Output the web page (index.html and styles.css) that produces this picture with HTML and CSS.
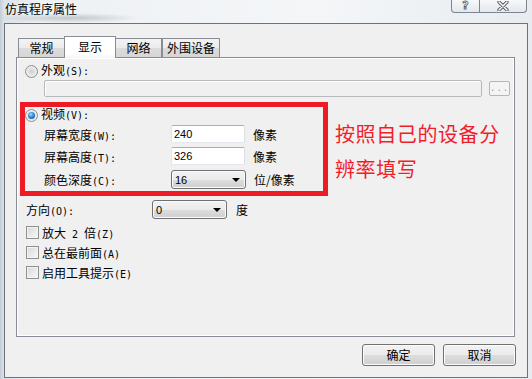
FILE: index.html
```html
<!DOCTYPE html>
<html lang="zh-CN">
<head>
    <meta charset="UTF-8">
    <title>仿真程序属性</title>
    <link rel="stylesheet" href="styles.css">
</head>
<body>
    <div class="window">
        <div class="titlebar">
            <div class="title">仿真程序属性</div>
            <div class="caption-buttons">
                <div class="caption-btn help-btn">?</div>
                <div class="caption-btn close-btn">
                    <svg width="12" height="10" viewBox="0 0 12 10">
                        <path d="M2 1 L10 9 M10 1 L2 9" stroke="#5b6066" stroke-width="3.4" stroke-linecap="round"/>
                        <path d="M2 1 L10 9 M10 1 L2 9" stroke="#fff" stroke-width="1.4" stroke-linecap="round"/>
                    </svg>
                </div>
            </div>
        </div>

        <div class="client">
            <div class="tabs">
                <div class="tab tab-general">常规</div>
                <div class="tab tab-display active">显示</div>
                <div class="tab tab-network">网络</div>
                <div class="tab tab-devices">外围设备</div>
            </div>

            <div class="panel">
                <div class="option-row">
                    <span class="radio"></span>
                    <span>外观<span class="key">(S):</span></span>
                </div>
                <div class="skin-row">
                    <div class="textbox disabled"></div>
                    <div class="browse-btn">...</div>
                </div>

                <div class="option-row video-row">
                    <span class="radio checked"></span>
                    <span>视频<span class="key">(V):</span></span>
                </div>
                <div class="field-row first">
                    <span class="field-label">屏幕宽度<span class="key">(W):</span></span>
                    <div class="textbox">240</div>
                    <span class="unit">像素</span>
                </div>
                <div class="field-row second">
                    <span class="field-label">屏幕高度<span class="key">(T):</span></span>
                    <div class="textbox">326</div>
                    <span class="unit">像素</span>
                </div>
                <div class="field-row third">
                    <span class="field-label">颜色深度<span class="key">(C):</span></span>
                    <div class="combo"><span>16</span><span class="arrow"></span></div>
                    <span class="unit">位/像素</span>
                </div>

                <div class="direction-row">
                    <span class="direction-label">方向<span class="key">(O):</span></span>
                    <div class="combo direction-combo"><span>0</span><span class="arrow"></span></div>
                    <span class="unit-deg">度</span>
                </div>

                <div class="check-row">
                    <span class="checkbox"></span>
                    <span>放大<span class="key"> 2 </span>倍<span class="key">(Z)</span></span>
                </div>
                <div class="check-row">
                    <span class="checkbox"></span>
                    <span>总在最前面<span class="key">(A)</span></span>
                </div>
                <div class="check-row">
                    <span class="checkbox"></span>
                    <span>启用工具提示<span class="key">(E)</span></span>
                </div>
            </div>

            <div class="dialog-buttons">
                <div class="btn">确定</div>
                <div class="btn">取消</div>
            </div>
        </div>

        <!-- red annotation drawn over the screenshot -->
        <div class="annotation-box"></div>
        <div class="annotation-text">按照自己的设备分<br>辨率填写</div>
    </div>
</body>
</html>
```

FILE: styles.css
```css
body {
    margin: 0;
    font-family: "Noto Sans CJK SC", sans-serif;
    font-size: 12px;
    color: #000;
    background: #e9edf1;
}
.window {
    position: relative;
    width: 532px;
    height: 379px;
    overflow: hidden;
    background: linear-gradient(90deg, #c3ccd6 0, #dbe2e9 4px, #eef1f4 40px, #f4f6f8 60%, #e8ecf0 100%);
}
.titlebar {
    height: 23px;
    display: flex;
    justify-content: space-between;
    align-items: flex-start;
    background: radial-gradient(ellipse 70px 5px at 70px 18px, rgba(80, 80, 80, 0.28), transparent);
}
.title {
    margin: 1px 0 0 5px;
    line-height: 16px;
    font-size: 12px;
    text-shadow: 0 0 6px rgba(255, 255, 255, 0.9);
}
.caption-buttons {
    display: flex;
    margin-right: 5px;
}
.caption-btn {
    height: 12px;
    border: 1px solid #7d858e;
    border-top: none;
    background: linear-gradient(#f7f8fa, #e4e8ec);
    display: flex;
    justify-content: center;
    align-items: center;
}
.help-btn {
    width: 27px;
    border-right: none;
    border-radius: 0 0 0 4px;
    font-family: "DejaVu Sans", sans-serif;
    font-weight: bold;
    font-size: 11px;
    line-height: 12px;
    color: #fff;
    -webkit-text-stroke: 0.8px #5b6066;
}
.close-btn {
    width: 46px;
    border-radius: 0 0 4px 0;
}
.client {
    margin-left: 4px;
    width: 524px;
    height: 355px;
    box-sizing: border-box;
    border: 1px solid #6e7378;
    background: #f0f0f0;
}
.tabs {
    position: relative;
    z-index: 1;
    display: flex;
    align-items: flex-end;
    height: 21px;
    margin: 12px 0 0 13px;
}
.tab {
    height: 19px;
    box-sizing: border-box;
    border: 1px solid #898c95;
    border-bottom: none;
    background: linear-gradient(#f3f3f3, #ebebeb 50%, #dcdcdc 51%, #d6d6d6);
    text-align: center;
    line-height: 18px;
}
.tab-general {
    width: 47px;
}
.tab-display {
    width: 52px;
    height: 22px;
    margin: 0 0 -1px -1px;
    background: linear-gradient(#fff, #fff 80%, #f4f4f4);
    line-height: 19px;
}
.tab-network {
    width: 47px;
    margin-left: -1px;
}
.tab-devices {
    width: 58px;
}
.panel {
    margin-left: 11px;
    width: 499px;
    height: 280px;
    box-sizing: border-box;
    border: 1px solid #898c95;
    box-shadow: inset 1px 1px 0 #fff, inset -1px -1px 0 #fff;
    padding: 6px 0 0 8px;
}
.key {
    font-family: "DejaVu Sans Mono", monospace;
    font-size: 10px;
    white-space: pre;
}
.option-row {
    display: flex;
    align-items: center;
    gap: 3px;
    height: 14px;
    line-height: 14px;
}
.radio {
    position: relative;
    width: 13px;
    height: 13px;
    box-sizing: border-box;
    border: 1px solid #8b8d8f;
    border-radius: 50%;
    background: radial-gradient(circle at 50% 50%, #cfcfcf 0, #e8e8e8 55%, #fafafa 100%);
}
.radio.checked::after {
    content: "";
    position: absolute;
    left: 2px;
    top: 2px;
    width: 7px;
    height: 7px;
    border-radius: 50%;
    background: radial-gradient(circle at 40% 35%, #a5dcff 0, #2f8ad8 45%, #0d4a93 100%);
}
.skin-row {
    display: flex;
    align-items: center;
    height: 17px;
    margin: 2px 0 0 19px;
}
.textbox {
    width: 74px;
    height: 18px;
    box-sizing: border-box;
    border: 1px solid;
    border-color: #abadb3 #dbdfe6 #e3e9ef #e2e3ea;
    border-radius: 2px;
    background: #fff;
    padding-left: 2px;
    font-family: "Liberation Sans", sans-serif;
    font-size: 11px;
    line-height: 16px;
}
.textbox.disabled {
    width: 438px;
    height: 17px;
    border-color: #b5b8bc;
    background: #f0f0f0;
    box-shadow: inset 1px 1px 0 #fff;
}
.browse-btn {
    width: 21px;
    height: 15px;
    margin-left: 7px;
    box-sizing: border-box;
    border: 1px solid #b3b6b9;
    border-radius: 2px;
    background: #f4f4f4;
    color: #9a9a9a;
    font-family: "Liberation Mono", monospace;
    font-size: 9px;
    line-height: 14px;
    text-align: center;
    letter-spacing: 1px;
}
.video-row {
    margin-top: 11px;
}
.field-row {
    display: flex;
    align-items: center;
    margin-left: 19px;
}
.field-row.first {
    margin-top: 3px;
}
.field-row.second {
    margin-top: 4px;
}
.field-row.third {
    margin-top: 5px;
}
.field-label {
    width: 127px;
}
.unit {
    margin-left: 8px;
}
.combo {
    width: 75px;
    height: 19px;
    box-sizing: border-box;
    display: flex;
    align-items: center;
    justify-content: space-between;
    padding: 0 5px 0 3px;
    border: 1px solid #707070;
    border-radius: 3px;
    background: linear-gradient(#f2f2f2, #ebebeb 50%, #dddddd 51%, #cfcfcf);
    box-shadow: inset 0 0 0 1px #fbfbfb;
    font-family: "Liberation Sans", sans-serif;
    font-size: 11px;
}
.arrow {
    width: 0;
    height: 0;
    border-left: 4px solid transparent;
    border-right: 4px solid transparent;
    border-top: 4px solid #000;
}
.direction-row {
    display: flex;
    align-items: center;
    margin: 11px 0 0 1px;
}
.direction-label {
    width: 126px;
}
.unit-deg {
    margin-left: 9px;
}
.check-row {
    display: flex;
    align-items: center;
    gap: 3px;
    height: 13px;
    margin: 7px 0 0 1px;
}
.checkbox {
    width: 13px;
    height: 13px;
    box-sizing: border-box;
    border: 1px solid #8e8f8f;
    background: linear-gradient(135deg, #d8d8d8, #f8f8f8);
    box-shadow: inset 0 0 0 1px #f4f4f4;
}
.dialog-buttons {
    display: flex;
    justify-content: flex-end;
    gap: 8px;
    margin-top: 7px;
    padding-right: 11px;
}
.btn {
    width: 73px;
    height: 22px;
    box-sizing: border-box;
    border: 1px solid #707070;
    border-radius: 3px;
    background: linear-gradient(#f2f2f2, #ebebeb 50%, #dddddd 51%, #cfcfcf);
    box-shadow: inset 0 0 0 1px #fcfcfc;
    text-align: center;
    line-height: 20px;
}
.annotation-box {
    position: absolute;
    left: 20px;
    top: 102px;
    width: 308px;
    height: 94px;
    box-sizing: border-box;
    border: 5px solid #ed1c24;
}
.annotation-text {
    position: absolute;
    left: 335px;
    top: 116px;
    color: #f21d2a;
    font-size: 20px;
    line-height: 35px;
    letter-spacing: 0.6px;
    white-space: nowrap;
}
```
